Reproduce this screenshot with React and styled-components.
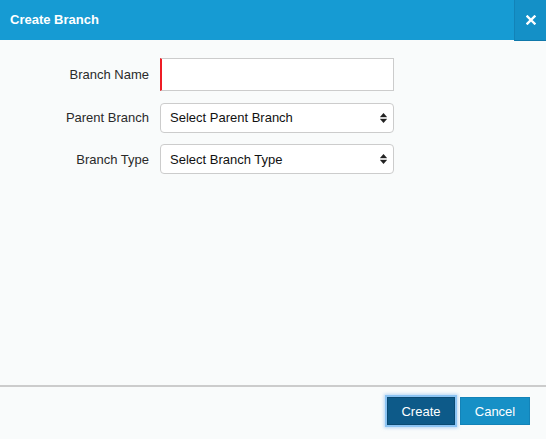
import styled, { createGlobalStyle } from "styled-components";

const GlobalStyle = createGlobalStyle`
  html, body {
    margin: 0;
    padding: 0;
    background: #f9fbfb;
  }
  * {
    box-sizing: border-box;
  }
`;

const Dialog = styled.div`
  width: 546px;
  height: 439px;
  display: flex;
  flex-direction: column;
  background: #f9fbfb;
  font-family: "Liberation Sans", Arial, sans-serif;
  font-size: 13px;
  color: #333;
`;

const Header = styled.header`
  height: 40px;
  display: flex;
  align-items: flex-start;
  justify-content: space-between;
  background: #169bd3;
`;

const Title = styled.h1`
  margin: 0;
  padding-left: 10px;
  line-height: 40px;
  font-size: 13px;
  font-weight: bold;
  color: #fff;
`;

const CloseButton = styled.button`
  width: 32px;
  height: 41px;
  padding: 0;
  display: flex;
  align-items: center;
  justify-content: center;
  background: #1490c7;
  border: none;
  border-left: 1px solid #1283b8;
  border-bottom: 1px solid #0f78aa;
  cursor: pointer;
`;

const Body = styled.div`
  flex: 1;
  padding-top: 18px;
`;

const FormGrid = styled.div`
  display: grid;
  grid-template-columns: 150px 234px;
  column-gap: 10px;
  row-gap: 11.5px;
  align-items: center;
`;

const Label = styled.label`
  text-align: right;
  padding-right: 1px;
  color: #2a2a2a;
`;

const TextInput = styled.input`
  height: 33px;
  width: 100%;
  border: 1px solid #cccccc;
  border-left: 2px solid #ee1c25;
  background: #fff;
  outline: none;
  padding: 0 8px;
  font: inherit;
`;

const SelectWrap = styled.div`
  position: relative;
  height: ${(p) => p.$h}px;
`;

const Select = styled.select`
  appearance: none;
  -webkit-appearance: none;
  width: 100%;
  height: 100%;
  border: 1px solid #cccccc;
  border-radius: 4px;
  background: #fff;
  padding: 0 20px 0 9px;
  font: inherit;
  color: #111;
  outline: none;
`;

const Arrow = styled.svg`
  position: absolute;
  right: 7px;
  top: 50%;
  transform: translateY(-50%);
  pointer-events: none;
`;

const Footer = styled.footer`
  display: flex;
  justify-content: flex-end;
  gap: 5px;
  border-top: 2px solid #cccccc;
  padding: 10px 16px 14px;
`;

const Button = styled.button`
  height: 28px;
  width: ${(p) => p.$w}px;
  padding: 0;
  font-family: "Liberation Sans", Arial, sans-serif;
  font-size: 13px;
  color: #fff;
  cursor: pointer;
  background: ${(p) => (p.$primary ? "#0d5a89" : "#1690c6")};
  border: 1px solid ${(p) => (p.$primary ? "#0a4b73" : "#1383b8")};
  box-shadow: ${(p) =>
    p.$primary ? "0 0 0 2px #8cc4f3, 0 0 3px 3px rgba(120,180,240,0.5)" : "none"};
`;

const SortArrow = () => (
  <Arrow width="7" height="10" viewBox="0 0 7 10">
    <path d="M3.5 0 L7 4 L0 4 Z" fill="#222" />
    <rect x="0" y="4.6" width="7" height="0.8" fill="#999" />
    <path d="M0 6 L7 6 L3.5 10 Z" fill="#222" />
  </Arrow>
);

const App = () => {
  return (
    <Dialog>
      <GlobalStyle />
      <Header>
        <Title>Create Branch</Title>
        <CloseButton aria-label="Close">
          <svg width="10" height="10" viewBox="0 0 10 10">
            <path
              d="M1.5 1.5 L8.5 8.5 M8.5 1.5 L1.5 8.5"
              stroke="#fff"
              strokeWidth="2.4"
              strokeLinecap="square"
            />
          </svg>
        </CloseButton>
      </Header>

      <Body>
        <FormGrid>
          <Label htmlFor="branchName">Branch Name</Label>
          <TextInput id="branchName" type="text" />

          <Label htmlFor="parentBranch">Parent Branch</Label>
          <SelectWrap $h={30}>
            <Select id="parentBranch" defaultValue="">
              <option value="">Select Parent Branch</option>
            </Select>
            <SortArrow />
          </SelectWrap>

          <Label htmlFor="branchType">Branch Type</Label>
          <SelectWrap $h={30}>
            <Select id="branchType" defaultValue="">
              <option value="">Select Branch Type</option>
            </Select>
            <SortArrow />
          </SelectWrap>
        </FormGrid>
      </Body>

      <Footer>
        <Button $primary $w={68}>Create</Button>
        <Button $w={70}>Cancel</Button>
      </Footer>
    </Dialog>
  );
};

export default App;
